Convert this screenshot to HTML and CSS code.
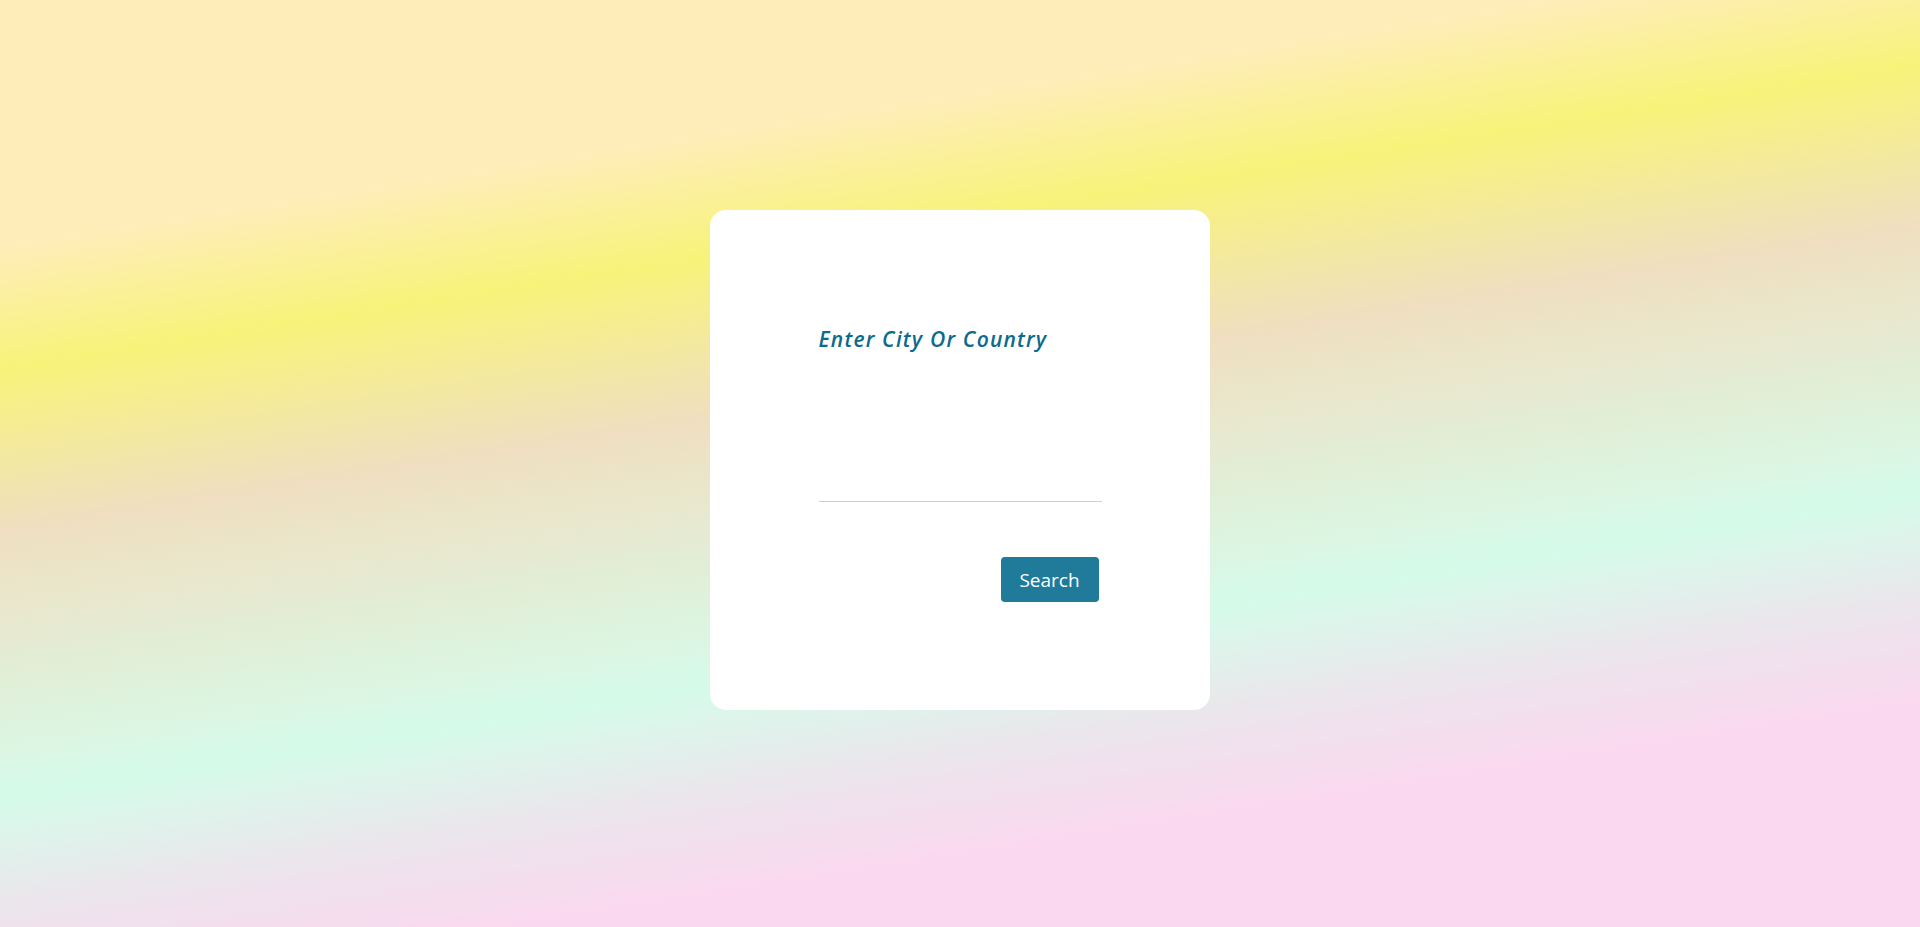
FILE: index.html
```html
<!DOCTYPE html>
<html lang="en">
<head>
<meta charset="utf-8">
<title>Weather Search</title>
<link rel="stylesheet" href="styles.css">
</head>
<body>
<main class="page">
  <section class="card">
    <form class="search-form" onsubmit="return false">
      <label class="search-label" for="city">Enter City Or Country</label>
      <input class="search-input" id="city" type="text">
      <button class="search-btn" type="submit">Search</button>
    </form>
  </section>
</main>
</body>
</html>
```

FILE: styles.css
```css
html, body {
  margin: 0;
  padding: 0;
  height: 100%;
}

body {
  background: linear-gradient(171deg,
    #feedb9 0%,
    #feedb9 20%,
    #f8f37a 30%,
    #f0dfc0 43%,
    #d6fbea 65%,
    #ebe6ec 73.5%,
    #fad9f0 81.5%,
    #fad9f0 100%);
  font-family: "Open Sans", "Liberation Sans", sans-serif;
}

.page {
  height: 100%;
  box-sizing: border-box;
  padding-top: 210px;
  display: flex;
  justify-content: center;
  align-items: flex-start;
}

.card {
  width: 500px;
  height: 500px;
  box-sizing: border-box;
  background: #ffffff;
  border-radius: 16px;
  padding-top: 117px;
  display: flex;
  justify-content: center;
}

.search-form {
  width: 283px;
  display: flex;
  flex-direction: column;
}

.search-label {
  font-family: "Open Sans", sans-serif;
  font-style: italic;
  font-weight: 600;
  font-size: 21px;
  line-height: 24px;
  color: #0c6a8c;
  letter-spacing: 1.2px;
  white-space: nowrap;
}

.search-input {
  margin-top: 110px;
  height: 41px;
  box-sizing: border-box;
  border: none;
  border-bottom: 1px solid #d0d0d0;
  outline: none;
  background: transparent;
  padding: 0;
  font-family: "Open Sans", sans-serif;
  font-size: 18px;
}

.search-btn {
  margin-top: 55px;
  align-self: flex-end;
  margin-right: 3px;
  width: 98px;
  height: 45px;
  border: none;
  border-radius: 4px;
  background: #207b9b;
  color: #ffffff;
  font-family: "Open Sans", sans-serif;
  font-size: 19px;
  padding: 0;
  cursor: pointer;
}
```
